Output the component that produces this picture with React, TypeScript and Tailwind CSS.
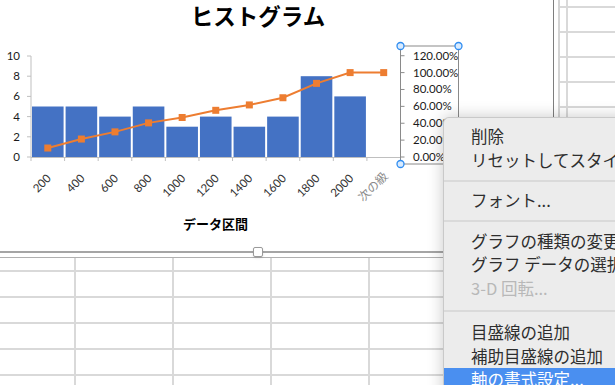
const bins = [
  { label: '200', v: 5 },
  { label: '400', v: 5 },
  { label: '600', v: 4 },
  { label: '800', v: 5 },
  { label: '1000', v: 3 },
  { label: '1200', v: 4 },
  { label: '1400', v: 3 },
  { label: '1600', v: 4 },
  { label: '1800', v: 8 },
  { label: '2000', v: 6 },
  { label: '次の級', v: 0 },
];

const X0 = 31;
const X1 = 400.5;
const Y0 = 157;
const CW = (X1 - X0) / bins.length;
const yv = (v: number) => Y0 - v * 10.1;
const yp = (p: number) => Y0 - p * 0.844;

const total = bins.reduce((s, b) => s + b.v, 0);
const cumul = bins.reduce<number[]>((acc, b) => {
  const prev = acc.length ? acc[acc.length - 1] : 0;
  acc.push(prev + b.v);
  return acc;
}, []).map((c) => (c / total) * 100);

function Histogram() {
  const centers = bins.map((_, i) => X0 + CW * (i + 0.5));
  const linePts = centers.map((cx, i) => `${cx},${yp(cumul[i])}`).join(' ');
  const last = bins.length - 1;

  return (
    <svg width="553" height="251" className="block font-['Lato','Noto_Sans_CJK_JP',sans-serif]">
      <text x="258" y="25" textAnchor="middle" fontSize="22.5" fontWeight="700" fill="#000" className="font-['Noto_Sans_CJK_JP',sans-serif]">
        ヒストグラム
      </text>

      {/* left axis */}
      <line x1={X0} y1={yv(10)} x2={X0} y2={Y0} stroke="#bfbfbf" />
      {[0, 2, 4, 6, 8, 10].map((v) => (
        <g key={v}>
          <line x1={X0 - 4} y1={yv(v)} x2={X0} y2={yv(v)} stroke="#bfbfbf" />
          <text x="20" y={yv(v) + 4} textAnchor="end" fontSize="11.5" fill="#1a1a1a">{v}</text>
        </g>
      ))}

      {/* bars */}
      {bins.map((b, i) =>
        b.v > 0 ? (
          <rect key={b.label} x={X0 + i * CW + 1} y={yv(b.v)} width={CW - 2} height={Y0 - yv(b.v)} fill="#4472c4" />
        ) : null
      )}

      {/* bottom axis */}
      <line x1={X0} y1={Y0 + 0.5} x2={X1} y2={Y0 + 0.5} stroke="#bfbfbf" />
      {bins.map((_, i) => (
        <line key={i} x1={X0 + i * CW} y1={Y0} x2={X0 + i * CW} y2={Y0 + 4} stroke="#bfbfbf" />
      ))}
      <line x1={X1} y1={Y0} x2={X1} y2={Y0 + 4} stroke="#bfbfbf" />

      {bins.map((b, i) => (
        <text
          key={b.label}
          transform={`translate(${centers[i] + (i === last ? 5 : 4)},${i === last ? 177 : 179}) rotate(-45)`}
          textAnchor="end"
          fontSize={i === last ? 12 : 11.5}
          fill={i === last ? '#8a8a8a' : '#333'}
          className={i === last ? "font-['Noto_Sans_CJK_JP',sans-serif]" : undefined}
        >
          {b.label}
        </text>
      ))}

      {/* cumulative line */}
      <polyline points={linePts} fill="none" stroke="#ed7d31" strokeWidth="2" />
      {centers.map((cx, i) => (
        <rect key={i} x={cx - 3.5} y={yp(cumul[i]) - 3.5} width="7" height="7" fill="#ed7d31" />
      ))}

      {/* right axis (selected) */}
      <line x1={X1} y1={yp(120)} x2={X1} y2={Y0} stroke="#bfbfbf" />
      {[0, 20, 40, 60, 80, 100, 120].map((p) => (
        <g key={p}>
          <line x1={X1} y1={yp(p)} x2={X1 + 4} y2={yp(p)} stroke="#8c8c8c" />
          <text x="413" y={yp(p) + 4} fontSize="11.5" fill="#1a1a1a">{p.toFixed(2)}%</text>
        </g>
      ))}
      <rect x={X1} y="46" width="58" height="118" fill="none" stroke="#8a8a8a" />
      {[[X1, 46], [X1 + 58, 46], [X1, 164], [X1 + 58, 164]].map(([x, y], i) => (
        <circle key={i} cx={x} cy={y} r="3.5" fill="#d8ebff" stroke="#2f8cf0" strokeWidth="1.3" />
      ))}

      <text x="215.5" y="229" textAnchor="middle" fontSize="13" fontWeight="700" fill="#000" className="font-['Noto_Sans_CJK_JP',sans-serif]">
        データ区間
      </text>
    </svg>
  );
}

type MenuEntry = { label: string; disabled?: boolean; active?: boolean } | { sep: string };

const menu: MenuEntry[] = [
  { label: '削除' },
  { label: 'リセットしてスタイルに合わせる' },
  { sep: 'h-[17px]' },
  { label: 'フォント...' },
  { sep: 'h-[17px]' },
  { label: 'グラフの種類の変更...' },
  { label: 'グラフ データの選択...' },
  { label: '3-D 回転...', disabled: true },
  { sep: 'h-[21px]' },
  { label: '目盛線の追加' },
  { label: '補助目盛線の追加' },
  { label: '軸の書式設定...', active: true },
];

function itemClass(m: { disabled?: boolean; active?: boolean }) {
  const base = 'h-[23.5px] leading-[23.5px] pl-[27px] whitespace-nowrap';
  if (m.active) return `${base} bg-[#4a8ff0] text-white`;
  if (m.disabled) return `${base} text-[#b8b8b8]`;
  return `${base} text-[#2e2e2e]`;
}

function ContextMenu() {
  return (
    <div className="absolute left-[443px] top-[117px] w-[300px] h-[300px] rounded-tl-[6px] bg-[#ececec] border-t border-l border-[#c9c9c9] shadow-[0_0_16px_rgba(0,0,0,0.22)] pt-[7px] font-['Noto_Sans_CJK_JP',sans-serif] text-[16.5px]">
      {menu.map((m, i) =>
        'sep' in m ? (
          <div key={i} className={`${m.sep} flex items-center`}>
            <div className="h-[2px] w-full bg-[#dadada]" />
          </div>
        ) : (
          <div key={i} className={itemClass(m)}>
            {m.label}
          </div>
        )
      )}
    </div>
  );
}

function Handle({ className }: { className: string }) {
  return <div className={`absolute w-[10px] h-[10px] bg-white border border-[#9a9a9a] rounded-[2px] shadow-sm ${className}`} />;
}

export default function App() {
  return (
    <div className="relative w-[615px] h-[385px] overflow-hidden bg-white">
      <div className="flex h-[257px]">
        <div className="w-[558px] shrink-0">
          <div className="relative w-[554px] h-[253px] border-r border-b-2 border-r-[#7e7e7e] border-b-[#a5a5a5]">
            <Histogram />
            <Handle className="left-[253px] bottom-[-6px]" />
            <Handle className="right-[-6px] top-[117px]" />
          </div>
        </div>
        <div className="flex-1 flex flex-col border-l-2 border-[#d4d4d4]">
          <div className="h-[6px] flex">
            <div className="w-[8px] border-r-2 border-[#d9d9d9]" />
          </div>
          {Array.from({ length: 10 }).map((_, i) => (
            <div key={i} className="h-[26px] flex border-t-2 border-[#d9d9d9]">
              <div className="w-[8px] border-r-2 border-[#d9d9d9]" />
            </div>
          ))}
        </div>
      </div>

      <div className="border-t border-[#b0b0b0]">
        {[0, 1, 2, 3, 4, 5].map((r) => (
          <div key={r} className={r === 0 ? 'flex h-[12px]' : 'flex h-[26px] border-t-2 border-[#d9d9d9]'}>
            <div className="w-[76px] border-r-2 border-[#d9d9d9]" />
            <div className="w-[98px] border-r-2 border-[#d9d9d9]" />
            <div className="w-[98px] border-r-2 border-[#d9d9d9]" />
            <div className="w-[98px] border-r-2 border-[#d9d9d9]" />
            <div className="w-[98px] border-r-2 border-[#d9d9d9]" />
          </div>
        ))}
      </div>

      <ContextMenu />
    </div>
  );
}
